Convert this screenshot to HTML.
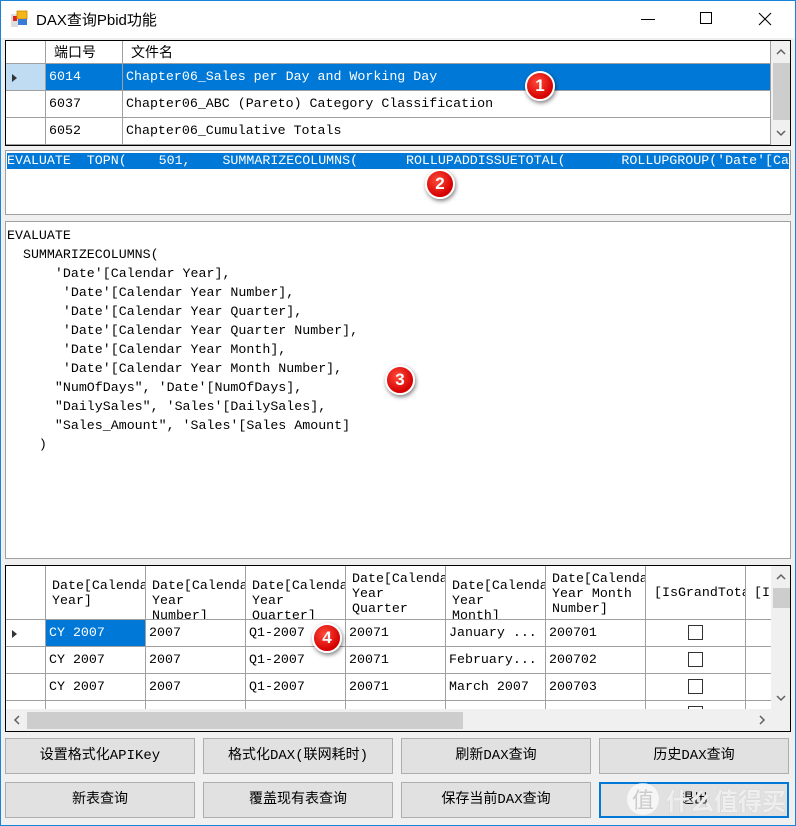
<!DOCTYPE html>
<html><head><meta charset="utf-8"><style>
*{margin:0;padding:0;box-sizing:border-box}
html,body{width:796px;height:826px;overflow:hidden}
body{background:#f0f0f0;position:relative;font-family:"Liberation Sans","Noto Sans CJK SC",sans-serif;font-size:13px;color:#000}
.a{position:absolute}
.m{font-family:"Liberation Mono","Noto Sans CJK SC",monospace;font-size:13.3px;white-space:pre}
.title{left:0;top:0;width:796px;height:38px;background:#fff}
.win{left:0;top:0;width:796px;height:826px;border:1px solid #1883d7;pointer-events:none}
.grid{background:#fff;border:1px solid #000;overflow:hidden}
.c{position:absolute;border-right:1px solid #a0a0a0;border-bottom:1px solid #a0a0a0;overflow:hidden;white-space:nowrap;padding-left:3px}
.sel{background:#0078d7;color:#fff}
.badge{position:absolute;width:30px;height:30px;border-radius:50%;background:radial-gradient(circle at 40% 35%,#ff4a3a,#d40000 70%);border:2px solid #fff;box-shadow:1px 2px 4px rgba(0,0,0,.5);color:#fff;font:bold 17px "Liberation Sans",sans-serif;text-align:center;line-height:26px}
.btn{position:absolute;height:36px;width:190px;background:#e1e1e1;border:1px solid #adadad;text-align:center;line-height:34px;font-family:"Liberation Mono","Noto Sans CJK SC",monospace;font-size:14px;white-space:nowrap}
.sb{background:#f0f0f0}
.chk{position:absolute;width:15px;height:15px;border:1px solid #333;background:#fff}
.tri{position:absolute;width:0;height:0;border-top:4px solid transparent;border-bottom:4px solid transparent;border-left:5px solid #333}
svg.ar{position:absolute}
</style></head><body>
<div class="a title"></div>
<svg class="a" style="left:11px;top:10px" width="18" height="18"><rect x="0" y="4" width="7" height="13" fill="#ddd"/><rect x="2" y="6" width="4" height="5" fill="#d22"/><rect x="6" y="1" width="10" height="8" fill="#f2b619" stroke="#c80" stroke-width=".8"/><rect x="7" y="9" width="9" height="6" fill="#3a7ad9"/></svg>
<div class="a" style="left:36px;top:9px;font-size:15px">DAX查询Pbid功能</div>
<div class="a" style="left:641px;top:19px;width:14px;height:1px;background:#000"></div>
<div class="a" style="left:700px;top:12px;width:12px;height:12px;border:1px solid #000"></div>
<svg class="a" style="left:758px;top:12px" width="14" height="14"><path d="M1 1L13 13M13 1L1 13" stroke="#000" stroke-width="1.1"/></svg>

<!-- grid 1 -->
<div class="a grid" style="left:5px;top:40px;width:786px;height:106px">
 <div class="c" style="left:0;top:0;width:40px;height:23px"></div>
 <div class="c" style="left:40px;top:0;width:77px;height:23px;font-size:14px;line-height:22px;padding-left:8px">端口号</div>
 <div class="c" style="left:117px;top:0;width:648px;height:23px;font-size:14px;line-height:22px;padding-left:8px">文件名</div>
 <div class="c" style="left:0;top:23px;width:40px;height:27px;background:#bfdcf3"></div><div class="tri" style="left:6px;top:33px"></div>
 <div class="c sel m" style="left:40px;top:23px;width:77px;height:27px;line-height:26px">6014</div>
 <div class="c sel m" style="left:117px;top:23px;width:648px;height:27px;line-height:26px">Chapter06_Sales per Day and Working Day</div>
 <div class="c" style="left:0;top:50px;width:40px;height:27px"></div>
 <div class="c m" style="left:40px;top:50px;width:77px;height:27px;line-height:26px">6037</div>
 <div class="c m" style="left:117px;top:50px;width:648px;height:27px;line-height:26px">Chapter06_ABC (Pareto) Category Classification</div>
 <div class="c" style="left:0;top:77px;width:40px;height:27px"></div>
 <div class="c m" style="left:40px;top:77px;width:77px;height:27px;line-height:26px">6052</div>
 <div class="c m" style="left:117px;top:77px;width:648px;height:27px;line-height:26px">Chapter06_Cumulative Totals</div>
 <div class="a sb" style="left:765px;top:0;width:20px;height:104px"></div>
 <div class="a" style="left:767px;top:22px;width:17px;height:57px;background:#cdcdcd"></div>
 <svg class="ar" style="left:770px;top:7px" width="10" height="8"><path d="M1 6L5 2L9 6" stroke="#606060" stroke-width="1.5" fill="none"/></svg>
 <svg class="ar" style="left:770px;top:88px" width="10" height="8"><path d="M1 2L5 6L9 2" stroke="#606060" stroke-width="1.5" fill="none"/></svg>
</div>

<!-- textbox 2 -->
<div class="a" style="left:5px;top:150px;width:786px;height:65px;background:#fff;border:1px solid #a0a0a0"></div>
<div class="a m sel" style="left:7px;top:153px;width:782px;height:16px;line-height:16px;overflow:hidden">EVALUATE  TOPN(    501,    SUMMARIZECOLUMNS(      ROLLUPADDISSUETOTAL(       ROLLUPGROUP('Date'[Calendar</div>

<!-- textbox 3 -->
<div class="a m" style="left:5px;top:221px;width:786px;height:338px;background:#fff;border:1px solid #a0a0a0;padding:4px 0 0 1px;line-height:19px">EVALUATE
  SUMMARIZECOLUMNS(
      'Date'[Calendar Year],
       'Date'[Calendar Year Number],
       'Date'[Calendar Year Quarter],
       'Date'[Calendar Year Quarter Number],
       'Date'[Calendar Year Month],
       'Date'[Calendar Year Month Number],
      "NumOfDays", 'Date'[NumOfDays],
      "DailySales", 'Sales'[DailySales],
      "Sales_Amount", 'Sales'[Sales Amount]
    )</div>

<!-- grid 4 -->
<div class="a grid m" style="left:5px;top:565px;width:786px;height:167px">
 <div class="c" style="left:0;top:0;width:40px;height:54px"></div>
 <div class="c" style="left:40px;top:0;width:100px;height:54px;line-height:15px;padding:12px 0 0 6px;white-space:pre">Date[Calenda
Year]</div>
 <div class="c" style="left:140px;top:0;width:100px;height:54px;line-height:15px;padding:12px 0 0 6px;white-space:pre">Date[Calenda
Year
Number]</div>
 <div class="c" style="left:240px;top:0;width:100px;height:54px;line-height:15px;padding:12px 0 0 6px;white-space:pre">Date[Calenda
Year
Quarter]</div>
 <div class="c" style="left:340px;top:0;width:100px;height:54px;line-height:15px;padding:5px 0 0 6px;white-space:pre">Date[Calenda
Year
Quarter</div>
 <div class="c" style="left:440px;top:0;width:100px;height:54px;line-height:15px;padding:12px 0 0 6px;white-space:pre">Date[Calenda
Year
Month]</div>
 <div class="c" style="left:540px;top:0;width:100px;height:54px;line-height:15px;padding:5px 0 0 6px;white-space:pre">Date[Calenda
Year Month
Number]</div>
 <div class="c" style="left:640px;top:0;width:100px;height:54px;line-height:54px;padding-left:8px">[IsGrandTota</div>
 <div class="c" style="left:740px;top:0;width:40px;height:54px;line-height:54px;padding-left:8px">[I</div>
 <div class="c" style="left:0;top:54px;width:40px;height:27px"></div><div class="tri" style="left:6px;top:64px"></div>
 <div class="c sel" style="left:40px;top:54px;width:100px;height:27px;line-height:26px">CY 2007</div>
 <div class="c" style="left:140px;top:54px;width:100px;height:27px;line-height:26px">2007</div>
 <div class="c" style="left:240px;top:54px;width:100px;height:27px;line-height:26px">Q1-2007</div>
 <div class="c" style="left:340px;top:54px;width:100px;height:27px;line-height:26px">20071</div>
 <div class="c" style="left:440px;top:54px;width:100px;height:27px;line-height:26px">January ...</div>
 <div class="c" style="left:540px;top:54px;width:100px;height:27px;line-height:26px">200701</div>
 <div class="c" style="left:640px;top:54px;width:100px;height:27px"></div><div class="chk" style="left:682px;top:59px"></div>
 <div class="c" style="left:740px;top:54px;width:40px;height:27px"></div>

 <div class="c" style="left:0;top:81px;width:40px;height:27px"></div>
 <div class="c" style="left:40px;top:81px;width:100px;height:27px;line-height:26px">CY 2007</div>
 <div class="c" style="left:140px;top:81px;width:100px;height:27px;line-height:26px">2007</div>
 <div class="c" style="left:240px;top:81px;width:100px;height:27px;line-height:26px">Q1-2007</div>
 <div class="c" style="left:340px;top:81px;width:100px;height:27px;line-height:26px">20071</div>
 <div class="c" style="left:440px;top:81px;width:100px;height:27px;line-height:26px">February...</div>
 <div class="c" style="left:540px;top:81px;width:100px;height:27px;line-height:26px">200702</div>
 <div class="c" style="left:640px;top:81px;width:100px;height:27px"></div><div class="chk" style="left:682px;top:86px"></div>
 <div class="c" style="left:740px;top:81px;width:40px;height:27px"></div>

 <div class="c" style="left:0;top:108px;width:40px;height:27px"></div>
 <div class="c" style="left:40px;top:108px;width:100px;height:27px;line-height:26px">CY 2007</div>
 <div class="c" style="left:140px;top:108px;width:100px;height:27px;line-height:26px">2007</div>
 <div class="c" style="left:240px;top:108px;width:100px;height:27px;line-height:26px">Q1-2007</div>
 <div class="c" style="left:340px;top:108px;width:100px;height:27px;line-height:26px">20071</div>
 <div class="c" style="left:440px;top:108px;width:100px;height:27px;line-height:26px">March 2007</div>
 <div class="c" style="left:540px;top:108px;width:100px;height:27px;line-height:26px">200703</div>
 <div class="c" style="left:640px;top:108px;width:100px;height:27px"></div><div class="chk" style="left:682px;top:113px"></div>
 <div class="c" style="left:740px;top:108px;width:40px;height:27px"></div>

 <div class="c" style="left:0;top:135px;width:40px;height:27px"></div>
 <div class="c" style="left:40px;top:135px;width:100px;height:27px"></div>
 <div class="c" style="left:140px;top:135px;width:100px;height:27px"></div>
 <div class="c" style="left:240px;top:135px;width:100px;height:27px"></div>
 <div class="c" style="left:340px;top:135px;width:100px;height:27px"></div>
 <div class="c" style="left:440px;top:135px;width:100px;height:27px"></div>
 <div class="c" style="left:540px;top:135px;width:100px;height:27px"></div>
 <div class="c" style="left:640px;top:135px;width:100px;height:27px"></div><div class="chk" style="left:682px;top:140px"></div>
 <div class="a sb" style="left:765px;top:0;width:20px;height:165px"></div>
 <div class="a" style="left:767px;top:22px;width:17px;height:20px;background:#cdcdcd"></div>
 <svg class="ar" style="left:770px;top:7px" width="10" height="8"><path d="M1 6L5 2L9 6" stroke="#606060" stroke-width="1.5" fill="none"/></svg>
 <svg class="ar" style="left:770px;top:128px" width="10" height="8"><path d="M1 2L5 6L9 2" stroke="#606060" stroke-width="1.5" fill="none"/></svg>
 <div class="a sb" style="left:0;top:143px;width:765px;height:22px"></div>
 <div class="a" style="left:21px;top:146px;width:436px;height:17px;background:#cdcdcd"></div>
 <svg class="ar" style="left:7px;top:149px" width="8" height="10"><path d="M6 1L2 5L6 9" stroke="#606060" stroke-width="1.5" fill="none"/></svg>
 <svg class="ar" style="left:752px;top:149px" width="8" height="10"><path d="M2 1L6 5L2 9" stroke="#606060" stroke-width="1.5" fill="none"/></svg>
</div>

<!-- buttons -->
<div class="btn" style="left:5px;top:738px">设置格式化APIKey</div>
<div class="btn" style="left:203px;top:738px">格式化DAX(联网耗时)</div>
<div class="btn" style="left:401px;top:738px">刷新DAX查询</div>
<div class="btn" style="left:599px;top:738px">历史DAX查询</div>
<div class="btn" style="left:5px;top:782px">新表查询</div>
<div class="btn" style="left:203px;top:782px">覆盖现有表查询</div>
<div class="btn" style="left:401px;top:782px">保存当前DAX查询</div>
<div class="btn" style="left:599px;top:782px;border:2px solid #0078d7;line-height:32px">退出</div>
<div class="a" style="left:627px;top:783px;width:32px;height:32px;border-radius:50%;background:rgba(255,255,255,.7);color:#ccc;font-size:22px;text-align:center;line-height:32px;font-family:'Noto Sans CJK SC',sans-serif">值</div>
<div class="a" style="left:666px;top:784px;width:125px;white-space:nowrap;color:rgba(255,255,255,.75);font-size:24px;line-height:32px;font-family:'Noto Sans CJK SC',sans-serif;font-weight:bold;text-shadow:0 0 1px #bbb">什么值得买</div>

<!-- badges -->
<div class="badge" style="left:525px;top:71px">1</div>
<div class="badge" style="left:425px;top:169px">2</div>
<div class="badge" style="left:385px;top:365px">3</div>
<div class="badge" style="left:312px;top:623px">4</div>

<div class="a win"></div>
</body></html>
